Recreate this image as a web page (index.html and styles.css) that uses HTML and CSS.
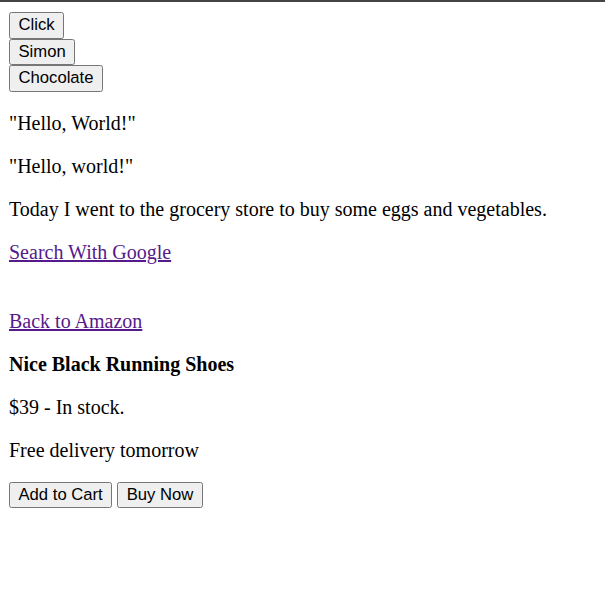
FILE: index.html
```html
<!DOCTYPE html>
<html>
<head>
<meta charset="utf-8">
<link rel="stylesheet" href="styles.css">
</head>
<body>
<button class="btn">Click</button><br>
<button class="btn">Simon</button><br>
<button class="btn">Chocolate</button>
<p class="text">"Hello, World!"</p>
<p class="text">"Hello, world!"</p>
<p class="text">Today I went to the grocery store to buy some eggs and vegetables.</p>
<a class="link" href="#">Search With Google</a><br><br><br>
<a class="link" href="#">Back to Amazon</a>
<p class="title">Nice Black Running Shoes</p>
<p class="text">$39 - In stock.</p>
<p class="text">Free delivery tomorrow</p>
<button class="btn">Add to Cart</button>
<button class="btn">Buy Now</button>
</body>
</html>
```
FILE: styles.css
```css
html {
  border-top: 2px solid #444;
  background: #fff;
}
body {
  zoom: 1.25;
  margin: 8px 8px 8px 7.2px;
  font-family: "Liberation Serif", "Times New Roman", serif;
  font-size: 16px;
  color: #000;
}
.btn {
  font-family: "Liberation Sans", Arial, sans-serif;
  font-size: 13.333px;
}
.link {
  color: #551a8b;
}
.title {
  font-weight: bold;
}
```
